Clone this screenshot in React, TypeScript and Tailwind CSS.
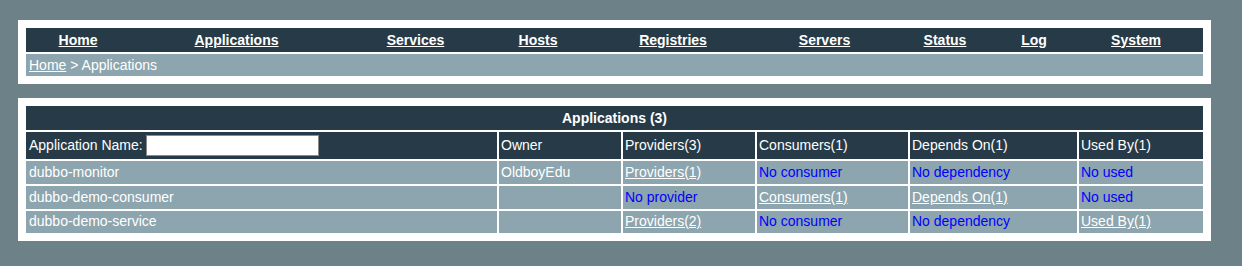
const navItems = [
  { label: "Home", w: "w-[104px]" },
  { label: "Applications", w: "w-[213px]" },
  { label: "Services", w: "w-[145px]" },
  { label: "Hosts", w: "w-[100px]" },
  { label: "Registries", w: "w-[170px]" },
  { label: "Servers", w: "w-[133px]" },
  { label: "Status", w: "w-[108px]" },
  { label: "Log", w: "w-[70px]" },
  { label: "System", w: "" },
];

type Cell = { text: string; link?: boolean; blue?: boolean };

const rows: { name: string; owner: string; cells: Cell[] }[] = [
  {
    name: "dubbo-monitor",
    owner: "OldboyEdu",
    cells: [
      { text: "Providers(1)", link: true },
      { text: "No consumer", blue: true },
      { text: "No dependency", blue: true },
      { text: "No used", blue: true },
    ],
  },
  {
    name: "dubbo-demo-consumer",
    owner: "",
    cells: [
      { text: "No provider", blue: true },
      { text: "Consumers(1)", link: true },
      { text: "Depends On(1)", link: true },
      { text: "No used", blue: true },
    ],
  },
  {
    name: "dubbo-demo-service",
    owner: "",
    cells: [
      { text: "Providers(2)", link: true },
      { text: "No consumer", blue: true },
      { text: "No dependency", blue: true },
      { text: "Used By(1)", link: true },
    ],
  },
];

const CellText = ({ c }: { c: Cell }) => {
  if (c.link) return <a className="underline text-white cursor-pointer">{c.text}</a>;
  return <span className="text-[#0000ff]">{c.text}</span>;
};

export default function App() {
  return (
    <div
      className="w-[1242px] h-[266px] bg-[#6d8189] pt-5 pl-[18px] text-[14px] text-white"
      style={{ fontFamily: '"Liberation Sans", Arial, sans-serif' }}
    >
      <div className="w-[1193px] bg-white p-2">
        <table className="w-full table-fixed border-collapse bg-[#263b47]">
          <colgroup>
            {navItems.map((n) => (
              <col key={n.label} className={n.w} />
            ))}
          </colgroup>
          <tbody>
            <tr className="h-[24px]">
              {navItems.map((n) => (
                <td key={n.label} className="text-center font-bold p-0">
                  <a className="underline cursor-pointer">{n.label}</a>
                </td>
              ))}
            </tr>
          </tbody>
        </table>
        <div className="mt-[2px] h-[22px] bg-[#8da5ae] pl-[3px] flex items-center">
          <a className="underline cursor-pointer">Home</a>
          <span>&nbsp;&gt; Applications</span>
        </div>
      </div>

      <div className="w-[1193px] bg-white px-1.5 py-1.5 mt-[14px]">
        <table className="w-full table-fixed border-separate border-spacing-[2px]">
          <colgroup>
            <col className="w-[471px]" />
            <col className="w-[122px]" />
            <col className="w-[132px]" />
            <col className="w-[151px]" />
            <col className="w-[167px]" />
            <col />
          </colgroup>
          <thead>
            <tr className="h-[24px]">
              <th colSpan={6} className="bg-[#263b47] font-bold text-center p-0">
                Applications (3)
              </th>
            </tr>
            <tr className="h-[27px] bg-[#263b47] text-left">
              <th className="font-normal px-[3px] p-0">
                <div className="flex items-center">
                  <span>Application Name:</span>
                  <input
                    type="text"
                    className="ml-[3px] w-[173px] h-[21px] bg-white border border-[#8a8a8a] outline-none"
                  />
                </div>
              </th>
              <th className="font-normal px-[2px]">Owner</th>
              <th className="font-normal px-[2px]">Providers(3)</th>
              <th className="font-normal px-[2px]">Consumers(1)</th>
              <th className="font-normal px-[2px]">Depends On(1)</th>
              <th className="font-normal px-[2px]">Used By(1)</th>
            </tr>
          </thead>
          <tbody>
            {rows.map((r, i) => (
              <tr key={r.name} className={i === 0 ? "h-[23px] bg-[#8da5ae]" : "h-[22.5px] bg-[#8da5ae]"}>
                <td className="px-[3px] py-0">{r.name}</td>
                <td className="px-[2px] py-0">{r.owner}</td>
                {r.cells.map((c, j) => (
                  <td key={j} className="px-[2px] py-0">
                    <CellText c={c} />
                  </td>
                ))}
              </tr>
            ))}
          </tbody>
        </table>
      </div>
    </div>
  );
}
